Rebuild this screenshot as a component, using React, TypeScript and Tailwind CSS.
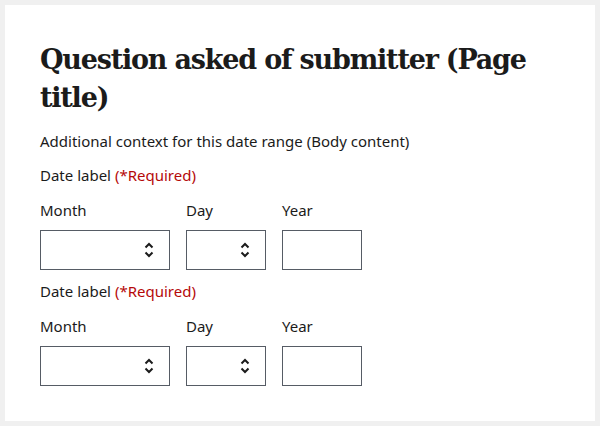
import React from "react";

const Chevrons = () => (
  <svg width="10" height="16" viewBox="0 0 10 16" className="text-[#1b1b1b]">
    <path d="M1.5 5.5 L5 2 L8.5 5.5" fill="none" stroke="currentColor" strokeWidth="2" />
    <path d="M1.5 10.5 L5 14 L8.5 10.5" fill="none" stroke="currentColor" strokeWidth="2" />
  </svg>
);

const SelectBox = ({ width }: { width: string }) => (
  <div className={`${width} h-10 border border-[#565c65] bg-white flex items-center justify-end pr-[15px]`}>
    <Chevrons />
  </div>
);

const DateField = () => (
  <div>
    <div className="leading-6">
      Date label <span className="text-[#b50909]">(*Required)</span>
    </div>
    <div className="flex gap-4 mt-[11px]">
      <div className="flex flex-col gap-2">
        <span className="leading-6">Month</span>
        <SelectBox width="w-[130px]" />
      </div>
      <div className="flex flex-col gap-2">
        <span className="leading-6">Day</span>
        <SelectBox width="w-20" />
      </div>
      <div className="flex flex-col gap-2">
        <span className="leading-6">Year</span>
        <div className="w-20 h-10 border border-[#565c65] bg-white" />
      </div>
    </div>
  </div>
);

export default function App() {
  return (
    <div className="min-h-screen bg-[#f0f0f0] p-[5px]">
      <div className="bg-white h-[416px] px-[35px] pt-[36px] text-[15px] text-[#1b1b1b] font-['Noto_Sans',sans-serif]">
        <h1 className="font-['DejaVu_Serif',serif] font-bold text-[27px] leading-[38px] tracking-[-1.2px]">
          Question asked of submitter (Page title)
        </h1>
        <p className="mt-[12px] leading-6">Additional context for this date range (Body content)</p>
        <div className="mt-[10px] flex flex-col gap-[9px]">
          <DateField />
          <DateField />
        </div>
      </div>
    </div>
  );
}
